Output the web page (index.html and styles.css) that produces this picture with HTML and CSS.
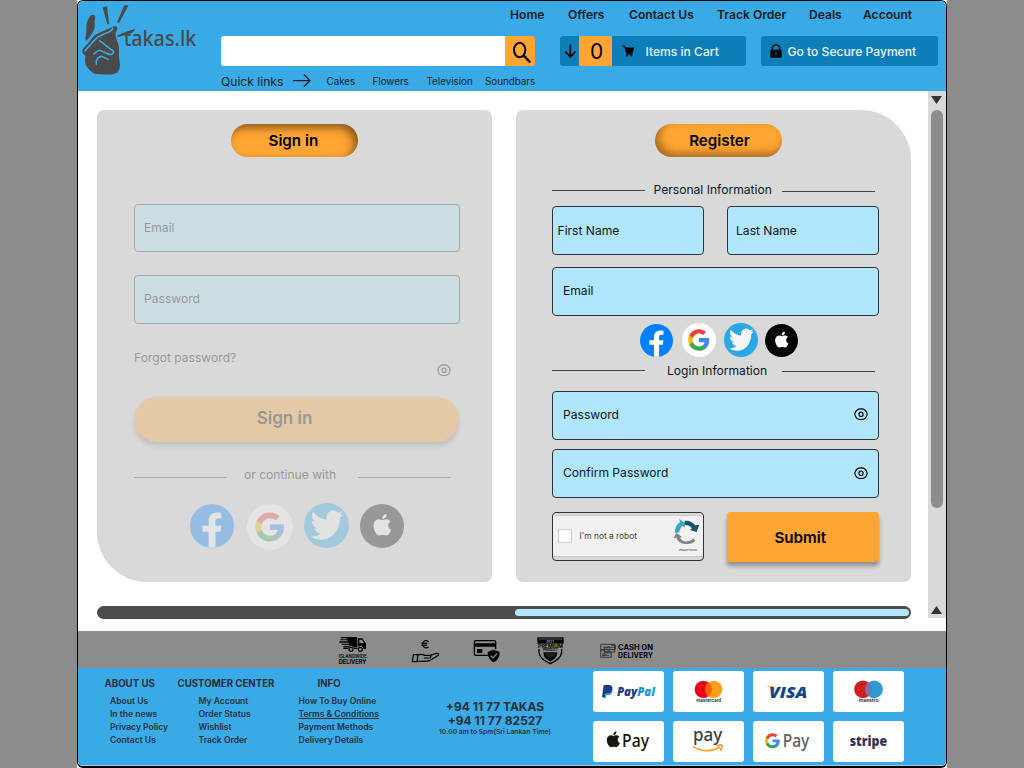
FILE: index.html
```html
<!DOCTYPE html>
<html lang="en">
<head>
<meta charset="utf-8">
<title>takas.lk - Sign in or Register</title>
<link rel="stylesheet" href="styles.css">
</head>
<body>
<svg class="sprite" width="0" height="0" aria-hidden="true">
  <symbol id="facebook" viewBox="0 0 48 48">
    <circle cx="24" cy="24" r="24" fill="#0080ff"/>
    <path fill="#fff" d="M20.3 47.8V30.3h-6.700v-6.700h6.700V19c0-6.500 3.800-9.700 9.600-9.700 1.800 0 3.600.2 4.200.4v6h-3.400c-2.200 0-2.900 1.300-2.900 3.200v4.700h6.400l-1 6.700h-5.400v17.500z"/>
  </symbol>
  <symbol id="g" viewBox="0 0 24 24">
    <path fill="#4285f4" d="M22.56 12.25c0-.78-.07-1.53-.2-2.25H12v4.26h5.92c-.26 1.37-1.04 2.53-2.21 3.31v2.77h3.57c2.08-1.92 3.28-4.74 3.28-8.09z"/>
    <path fill="#34a853" d="M12 23c2.97 0 5.46-.98 7.28-2.66l-3.57-2.77c-.98.66-2.23 1.06-3.71 1.06-2.86 0-5.29-1.93-6.16-4.53H2.18v2.84C3.99 20.53 7.7 23 12 23z"/>
    <path fill="#fbbc05" d="M5.84 14.09c-.22-.66-.35-1.36-.35-2.09s.13-1.43.35-2.09V7.07H2.18C1.43 8.55 1 10.22 1 12s.43 3.45 1.18 4.93l3.66-2.84z"/>
    <path fill="#ea4335" d="M12 5.38c1.62 0 3.06.56 4.21 1.64l3.15-3.15C17.45 2.09 14.97 1 12 1 7.7 1 3.99 3.47 2.18 7.07l3.66 2.84c.87-2.6 3.3-4.53 6.16-4.53z"/>
  </symbol>
  <symbol id="google" viewBox="0 0 48 48">
    <circle cx="24" cy="24" r="24" fill="#fff"/>
    <use href="#g" x="7.300" y="7.400" width="33.200" height="33.200"/>
  </symbol>
  <symbol id="twitter" viewBox="0 0 48 48">
    <circle cx="24" cy="24" r="24" fill="#2ba7e6"/>
    <path transform="translate(7.2 4.4) scale(1.45 1.6)" fill="#f5f7f8" d="M23.953 4.57a10 10 0 01-2.825.775 4.958 4.958 0 002.163-2.723c-.951.555-2.005.959-3.127 1.184a4.92 4.92 0 00-8.384 4.482C7.69 8.095 4.067 6.13 1.64 3.162a4.822 4.822 0 00-.666 2.475c0 1.71.87 3.213 2.188 4.096a4.904 4.904 0 01-2.228-.616v.06a4.923 4.923 0 003.946 4.827 4.996 4.996 0 01-2.212.085 4.936 4.936 0 004.604 3.417 9.867 9.867 0 01-6.102 2.105c-.39 0-.779-.023-1.17-.067a13.995 13.995 0 007.557 2.209c9.053 0 13.998-7.496 13.998-13.985 0-.21 0-.42-.015-.63A9.935 9.935 0 0024 4.59z"/>
  </symbol>
  <symbol id="apple-mark" viewBox="0 0 24 24">
    <path d="M12.152 6.896c-.948 0-2.415-1.078-3.96-1.04-2.04.027-3.91 1.183-4.961 3.014-2.117 3.675-.546 9.103 1.519 12.09 1.013 1.454 2.208 3.09 3.792 3.039 1.52-.065 2.09-.987 3.935-.987 1.831 0 2.35.987 3.96.948 1.637-.026 2.676-1.48 3.676-2.948 1.156-1.688 1.636-3.325 1.662-3.415-.039-.013-3.182-1.221-3.22-4.857-.026-3.04 2.48-4.494 2.597-4.559-1.429-2.09-3.623-2.324-4.39-2.376-2-.156-3.675 1.09-4.61 1.09zM15.53 3.83c.843-1.012 1.4-2.427 1.245-3.83-1.207.052-2.662.805-3.532 1.818-.78.896-1.454 2.338-1.273 3.714 1.338.104 2.715-.688 3.559-1.701"/>
  </symbol>
  <symbol id="apple" viewBox="0 0 48 48">
    <circle cx="24" cy="24" r="24" fill="#050505"/>
    <use href="#apple-mark" fill="#fff" x="12.600" y="11" width="23.500" height="23.500"/>
  </symbol>
  <symbol id="eye" viewBox="0 0 40 36">
    <path fill="none" stroke="#000" stroke-width="3.400" d="M2 18C4 8 11 2.500 20 2.500S36 8 38 18C36 28 29 33.500 20 33.500S4 28 2 18z"/>
    <ellipse cx="20" cy="18" rx="6" ry="6.500" fill="none" stroke="#000" stroke-width="3.400"/>
  </symbol>
</svg>

<div class="frame"><div class="page">
  <header class="header">
    <svg class="logo" viewBox="24 3 402 270" width="134" height="90">
      <g fill="#4a4a4a">
        <path d="M98 23l13-5 6 54-5 1zM163 15l13 1-29 53-6-2z"/>
        <path d="M49 78C50 64 57 55 62 46c6-4 14-2 14 5-2 8-3 13-2 20 2 13-4 24-10 33-5 8-11 13-15 18-4-2-3-10-2-15 3-10 2-19 2-29z"/>
        <path d="M37 155c-1-9 8-14 13-20 9-12 19-27 30-33l42-19c7-4 18-7 20 0 1 6-5 10-5 16-2 10 4 20 7 31 4 15 3 25 3 38 0 12 6 24 1 38-3 9-7 13-15 15-18 5-42 2-58 1-11-5-20-15-26-24-5-10-4-20-3-31-4-3-8-7-9-12z"/>
      </g>
      <g fill="none" stroke="#3dabe8" stroke-width="4.500" stroke-linecap="round" stroke-linejoin="round">
        <path d="M128 84c-2 8-8 11-16 14-13 5-25 10-33 17-12 11-20 24-34 37"/>
        <path d="M88 122c14 8 25 21 42 31 3 7-7 13-15 9l-25-11c-9 1-13 6-18 11"/>
        <path d="M79 193v-11c3-7 10-12 16-13l20 9"/>
      </g>
      <path d="M142 107c16-10 36-14 54-21-4 10-12 14-22 16-12 3-20 8-32 9z" fill="#4a4a4a"/>
      <text x="161" y="138" font-family="Noto Sans, sans-serif" font-weight="500" font-size="67" textLength="218" lengthAdjust="spacingAndGlyphs" fill="#4a4a4a">takas.lk</text>
    </svg>
    <div class="header-main">
      <nav class="nav"><a>Home</a><a>Offers</a><a>Contact Us</a><a>Track Order</a><a>Deals</a><a>Account</a></nav>
      <div class="tools">
        <div class="search"><div class="search-input"></div>
          <div class="search-button"><svg viewBox="0 0 90 90" width="30" height="30" fill="none" stroke="#000"><ellipse cx="44" cy="42" rx="17" ry="22" stroke-width="6"/><path d="M56 59l20 20" stroke-width="7"/></svg></div>
        </div>
        <div class="cart">
          <div class="cart-arrow"><svg viewBox="0 0 57 90" width="19" height="30" fill="none" stroke="#000" stroke-width="5" stroke-linecap="round" stroke-linejoin="round"><path d="M31 28v34M17 48l14 15 14-15"/></svg></div>
          <div class="cart-count">0</div>
          <div class="cart-label"><svg viewBox="0 0 38 36" width="12.500" height="12"><path d="M1 1h6l5 6h25l-5 19H13L7 6 1 5zM14 27h16v3H14z"/><circle cx="15" cy="32" r="3"/><circle cx="29" cy="32" r="3"/></svg><span>Items in Cart</span></div>
        </div>
        <div class="pay"><svg viewBox="0 0 36 42" width="12" height="14"><path d="M7 18v-6C7 5 12 2.500 18 2.500S29 5 29 12v6" fill="none" stroke="#000" stroke-width="4"/><rect x="1" y="17" width="34" height="24" rx="3"/><path d="M18 26v7" stroke="#0e7eb9" stroke-width="3"/></svg><span>Go to Secure Payment</span></div>
      </div>
      <div class="quick"><span class="quick-title">Quick links</span>
        <svg viewBox="0 0 54 40" width="18" height="13.300" fill="none" stroke="#0b1e28" stroke-width="4" stroke-linecap="round" stroke-linejoin="round"><path d="M2 20h48M34 3l17 17-17 17"/></svg>
        <a>Cakes</a><a>Flowers</a><a>Television</a><a>Soundbars</a></div>
    </div>
  </header>

  <main class="main">
    <div class="content">
      <div class="panels">
        <section class="panel signin">
          <h2 class="pill">Sign in</h2>
          <form class="faded">
            <label class="field email">Email</label>
            <label class="field password">Password</label>
            <div class="forgot"><span>Forgot password?</span><svg width="14" height="12.500"><use href="#eye"/></svg></div>
            <div class="signin-button">Sign in</div>
            <div class="divider continue"><i></i><span>or continue with</span><i></i></div>
            <div class="social large">
              <svg class="fb"><use href="#facebook"/></svg><svg class="go"><use href="#google"/></svg><svg class="tw"><use href="#twitter"/></svg><svg class="ap"><use href="#apple"/></svg>
            </div>
          </form>
        </section>
        <section class="panel register">
          <h2 class="pill">Register</h2>
          <form class="register-form">
            <div class="divider personal"><i></i><span>Personal Information</span><i></i></div>
            <div class="names"><label class="field first">First Name</label><label class="field last">Last Name</label></div>
            <label class="field">Email</label>
            <div class="social small">
              <svg class="fb"><use href="#facebook"/></svg><svg class="go"><use href="#google"/></svg><svg class="tw"><use href="#twitter"/></svg><svg class="ap"><use href="#apple"/></svg>
            </div>
            <div class="divider login"><i></i><span>Login Information</span><i></i></div>
            <label class="field pass"><span>Password</span><svg width="14" height="12.500"><use href="#eye"/></svg></label>
            <label class="field confirm"><span>Confirm Password</span><svg width="14" height="12.500"><use href="#eye"/></svg></label>
            <div class="actions">
              <div class="captcha"><div class="captcha-inner"><i class="box"></i><span>I'm not a robot</span>
                <svg viewBox="402 234 82 104" width="27.300" height="34.700">
                  <path d="M408 279c0-17 6-26 15-32l-2-10 17 12-1 13-7-4c-6 5-8 12-9 19z" fill="#35a8cf"/>
                  <path d="M437 242c15-1 25 4 32 14l12-2-8 22-20-6 6-5c-6-8-13-11-22-11z" fill="#1c5568"/>
                  <path d="M404 295l8-17 17 13-6 2c5 8 12 12 22 11 7 0 13-3 18-9l6 7c-8 8-16 10-26 10-16 0-26-6-31-19z" fill="#858585"/>
                  <text x="447" y="334" text-anchor="middle" font-family="Inter, sans-serif" font-weight="600" font-size="8" textLength="54" lengthAdjust="spacingAndGlyphs" fill="#444">reCAPTCHA</text>
                </svg></div></div>
              <div class="submit">Submit</div>
            </div>
          </form>
        </section>
      </div>
      <div class="hscroll"><i></i></div>
    </div>
    <div class="vscroll"><svg width="11" height="8" viewBox="0 0 11 8"><path d="M0 0h11L5.500 8z" fill="#333"/></svg><i></i><svg width="11" height="8" viewBox="0 0 11 8"><path d="M0 8h11L5.500 0z" fill="#333"/></svg></div>
  </main>

  <div class="strip">
    <svg viewBox="54 24 90 88" width="30" height="29.300">
      <path d="M62 27h49v31H70v-4h17v-3H65v-4h22v-3H58v-4h25v-3H61v-3h20v-3H62zM113 31h14l11 16v16h-8a9 9 0 0 0-18 0h-10a9 9 0 0 0-18 0H70v-4h43z"/><path d="M118 35h8l6 10h-14z" fill="#8c8c8c"/><circle cx="93" cy="64" r="6" fill="none" stroke="#000" stroke-width="3.500"/><circle cx="121" cy="64" r="6" fill="none" stroke="#000" stroke-width="3.500"/>
      <text x="56" y="91" font-family="Inter, sans-serif" font-weight="600" font-size="13" textLength="84" lengthAdjust="spacingAndGlyphs">ISLANDWIDE</text>
      <text x="56" y="108" font-family="Inter, sans-serif" font-weight="700" font-size="17" textLength="83" lengthAdjust="spacingAndGlyphs">DELIVERY</text>
    </svg>
    <svg viewBox="272 24 90 88" width="30" height="29.300" fill="none" stroke="#000" stroke-width="3.500" stroke-linejoin="round">
      <path d="M325 41c-11-7-18 0-18 8s8 14 18 8M303 46h18M303 52h17"/><path d="M279 80h14l-3 21h-14zM292 81c9-3 15-3 20 1h16c6 1 5 8-1 8h-16M328 83l20-7c7-1 9 4 4 7l-25 15c-8 3-28 3-37 1"/>
    </svg>
    <svg viewBox="460 24 90 88" width="30" height="29.300">
      <path fill="none" stroke="#000" stroke-width="4" d="M506 82h-38q-4 0-4-4V42q0-4 4-4h56q4 0 4 4v21"/><path d="M464 46h64v10h-64zM472 63h16v12h-16z"/><path d="M522 65l18 7c0 14-5 24-18 31-13-7-18-17-18-31z"/><path d="M513 83l7 7 12-13" fill="none" stroke="#8c8c8c" stroke-width="4"/>
    </svg>
    <svg viewBox="648 24 90 88" width="30" height="29.300">
      <path d="M652 28h79v19h-79z"/><path d="M657 33h69" stroke="#8c8c8c" stroke-width="2"/><text x="691" y="44" text-anchor="middle" font-size="9" font-weight="700" font-family="Inter, sans-serif" fill="#8c8c8c">BEST</text>
      <text x="654" y="59" font-size="13" font-weight="700" font-family="Inter, sans-serif" textLength="75" lengthAdjust="spacingAndGlyphs">PREMIUM</text><text x="669" y="69" font-size="9" font-weight="700" font-family="Inter, sans-serif" textLength="44" lengthAdjust="spacingAndGlyphs">PRODUCT</text>
      <path d="M657 63v10c2 17 16 25 34 34 18-9 32-17 34-34V63" fill="none" stroke="#000" stroke-width="4"/><path d="M670 73h42l-2 12c-4 7-11 11-19 16-8-5-15-9-19-16z"/><path d="M676 78h30M678 84h26" stroke="#777" stroke-width="1.500"/>
    </svg>
    <svg viewBox="838 24 168 88" width="56" height="29.300">
      <g fill="none" stroke="#292929" stroke-width="2.500"><path d="M843 49h42v16h-42zM854 58h31v14h-31zM843 66h12v9h20v13h-32zM874 52h13v12M858 75c4-7 12-7 16-2M849 57h8M850 82h18"/><circle cx="866" cy="61" r="5"/><circle cx="852" cy="80" r="4"/></g>
      <text x="895" y="66" font-size="21" font-weight="700" font-family="Inter, sans-serif" textLength="105" lengthAdjust="spacingAndGlyphs">CASH ON</text><text x="895" y="90" font-size="21" font-weight="700" font-family="Inter, sans-serif" textLength="105" lengthAdjust="spacingAndGlyphs">DELIVERY</text>
    </svg>
  </div>

  <footer class="footer">
    <div class="links about"><h3>ABOUT US</h3><a>About Us</a><a>In the news</a><a>Privacy Policy</a><a>Contact Us</a></div>
    <div class="links customer"><h3>CUSTOMER CENTER</h3><a>My Account</a><a>Order Status</a><a>Wishlist</a><a>Track Order</a></div>
    <div class="links info"><h3>INFO</h3><a>How To Buy Online</a><a><u>Terms &amp; Conditions</u></a><a>Payment Methods</a><a>Delivery Details</a></div>
    <div class="phone"><b>+94 11 77 TAKAS</b><b>+94 11 77 82527</b><small>10.00 am to 5pm(Sri Lankan Time)</small></div>
    <div class="cards">
      <svg viewBox="0 0 213 123"><path d="M32 42h17c8 1 11 6 9 14-2 9-8 12-16 12h-5l-2 10h-8z" fill="#1c3b83"/><path d="M57 53c4 12-2 19-14 19h-3l-2 10h-8l1-4h4l3-10h5c9 0 14-6 14-15z" fill="#189bd7"/><text x="72" y="75" font-family="Open Sans, sans-serif" font-weight="800" font-style="italic" font-size="34" textLength="114" lengthAdjust="spacingAndGlyphs" fill="#253b80">Pay<tspan fill="#179bd7">Pal</tspan></text></svg>
      <svg viewBox="0 0 213 123"><circle cx="91" cy="55" r="26" fill="#eb001b"/><circle cx="122" cy="55" r="26" fill="#f79e1b"/><path d="M106.500 34a26 26 0 0 1 0 42 26 26 0 0 1 0-42z" fill="#ff5f00"/><text x="107" y="93" text-anchor="middle" font-family="Inter, sans-serif" font-weight="600" font-size="13" textLength="75" lengthAdjust="spacingAndGlyphs" fill="#222">mastercard</text></svg>
      <svg viewBox="0 0 213 123"><path d="M42 45h14c5 0 7 2 8 6l2 12c-5-9-13-14-24-17z" fill="#f2ae14"/><text x="48" y="80" font-family="Open Sans, sans-serif" font-weight="800" font-style="italic" font-size="49" textLength="115" lengthAdjust="spacingAndGlyphs" fill="#0e4595">VISA</text></svg>
      <svg viewBox="0 0 213 123"><circle cx="90" cy="55" r="26.500" fill="#d0201e"/><circle cx="123" cy="55" r="26.500" fill="#2f98d6"/><path d="M106.500 34a26.500 26.500 0 0 1 0 42 26.500 26.500 0 0 1 0-42z" fill="#7375a9"/><text x="107" y="94" text-anchor="middle" font-family="Inter, sans-serif" font-weight="600" font-size="13" textLength="59" lengthAdjust="spacingAndGlyphs" fill="#222">maestro</text></svg>
      <svg viewBox="0 0 213 123"><use href="#apple-mark" x="37" y="31" width="48" height="48" fill="#15160f"/><text x="87" y="79" font-family="Noto Sans, sans-serif" font-weight="500" font-size="54" textLength="81" lengthAdjust="spacingAndGlyphs" fill="#15160f">Pay</text></svg>
      <svg viewBox="0 0 213 123"><text x="60" y="61" font-family="Noto Sans, sans-serif" font-weight="500" font-size="53" textLength="88" lengthAdjust="spacingAndGlyphs" fill="#36424d">pay</text><path d="M60 76c25 16 55 17 80 3M131 74c12-3 18-2 16 2-1 7-3 10-6 13" fill="none" stroke="#f79c1c" stroke-width="5"/></svg>
      <svg viewBox="0 0 213 123"><use href="#g" x="34" y="35" width="49" height="49"/><text x="89" y="79" font-family="Noto Sans, sans-serif" font-weight="500" font-size="54" textLength="80" lengthAdjust="spacingAndGlyphs" fill="#5f6368">Pay</text></svg>
      <svg viewBox="0 0 213 123"><text x="50" y="75" font-family="Open Sans, sans-serif" font-weight="800" font-size="44" textLength="112" lengthAdjust="spacingAndGlyphs" fill="#32325d">stripe</text></svg>
    </div>
  </footer>
</div></div>
</body>
</html>
```

FILE: styles.css
```css
* { box-sizing: border-box; }
body { margin: 0; background: #8c8c8c; font-family: Inter, "Liberation Sans", sans-serif; color: #0d171c; overflow: hidden; }
svg { display: block; flex: none; }
h2, h3 { margin: 0; }
.sprite { position: absolute; }
.frame { width: 870px; height: 768px; margin-left: 77px; background: #fff; }
.page { width: 870px; height: 768px; border: 1px solid #000; border-bottom-width: 2px; border-radius: 6px; overflow: hidden; background: #fff; white-space: nowrap; }

.header { display: flex; height: 90px; background: #3aaae7; }
.logo { margin-right: 9px; }
.header-main { flex: 1; }
.nav { display: grid; grid-template-columns: 58px 61px 88px 92px 54px 60px; height: 27px; margin: 0 0 8px 289px; font-size: 12.100px; font-weight: 600; line-height: 27px; color: #0e1a20; }
.tools { display: flex; height: 30px; }
.search { display: flex; width: 314px; border-radius: 3px; overflow: hidden; margin-right: 25px; }
.search-input { flex: 1; background: #fff; }
.search-button { width: 30px; background: #ffa533; }
.cart { display: flex; width: 186px; margin-right: 15px; border-radius: 3px; overflow: hidden; background: #0e7eb9; }
.cart-arrow { width: 19px; }
.cart-count { width: 33px; padding-left: 2px; background: #ffa533; color: #000; font-size: 21px; line-height: 32px; text-align: center; }
.cart-label, .pay { display: flex; align-items: center; font-size: 12.100px; font-weight: 500; color: #e7f4fb; }
.cart-label { padding-left: 10px; gap: 11px; }
.pay { width: 177px; border-radius: 3px; background: #0e7eb9; padding-left: 9px; gap: 5.500px; }
.quick { display: flex; height: 25px; align-items: center; padding-top: 5px; font-size: 9.800px; color: #0b1e28; }
.quick-title { width: 72px; font-size: 12.100px; }
.quick a:nth-of-type(1) { width: 46px; margin-left: 15.500px; }
.quick a:nth-of-type(2) { width: 54px; }
.quick a:nth-of-type(3) { width: 58.500px; }

.main { display: flex; height: 540px; }
.content { width: 850px; padding: 19px 0 0 19px; }
.panels { display: flex; gap: 24px; }
.panel { width: 395px; height: 472px; background: #d9d9d9; padding-top: 14px; }
.signin { border-radius: 7px 7px 7px 50px; }
.register { border-radius: 7px 50px 7px 7px; }
.pill { width: 127px; height: 33px; border-radius: 17px; background: #ffa533; color: #000; font-size: 15.200px; font-weight: 600; line-height: 33px; text-align: center; }
.signin .pill { margin-left: 134.400px; padding-right: 3px; box-shadow: inset -4px 4px 9px rgba(0,0,0,.45); }
.register .pill { margin-left: 139px; padding-left: 2px; box-shadow: inset 4px -4px 9px rgba(0,0,0,.35); }
.faded { opacity: .3; margin: 47px 0 0 37px; width: 326px; color: #000; }
.field { display: flex; align-items: center; justify-content: space-between; height: 49px; border: 1px solid #333; border-radius: 4px; background: #b0e7ff; padding: 0 10px; font-size: 12.100px; }
.faded .field { padding: 0 9px 2px; }
.faded .email { height: 48px; padding-bottom: 1px; }
.password { margin-top: 23px; }
.forgot { display: flex; justify-content: space-between; height: 50px; margin: 23px 9.500px 0 0; font-size: 12.100px; line-height: 21px; }
.forgot svg { margin-top: 17px; }
.signin-button { height: 45px; width: 325px; border-radius: 23px; background: #ffa533; box-shadow: 0 4px 4px rgba(0,0,0,.35); font-size: 17px; font-weight: 600; line-height: 43px; text-align: center; padding-right: 24px; }
.divider { display: flex; align-items: center; font-size: 12.100px; line-height: 16px; }
.divider i { width: 93px; height: 1px; background: #444; }
.continue { margin-top: 25px; }
.continue span { width: 93px; margin: 0 21px 0 17px; }
.continue i { margin-top: 4px; }
.social { display: flex; align-items: flex-start; }
.large { margin: 20px 0 0 56px; }
.large .fb { width: 44px; height: 44px; margin-top: 1px; }
.large .go { width: 46px; height: 46px; margin: 1px 0 0 12.500px; }
.large .tw { width: 45px; height: 45px; margin-left: 11.500px; }
.large .ap { width: 44px; height: 44px; margin: 1px 0 0 11px; }
.register-form { width: 327px; margin: 25px 0 0 36px; }
.personal span { width: 118px; margin: 0 10.500px 0 8.500px; }
.personal { height: 16px; }
.divider.personal i:last-child, .divider.login i:last-child { margin-top: 2px; }
.names { display: flex; gap: 23px; margin: 8px 0 12px; }
.names .field { width: 152px; }
.names .first { padding-left: 4.500px; padding-bottom: 1px; }
.names .last { padding-left: 8px; padding-bottom: 1px; }
.register-form > .field { padding-bottom: 2px; }
.small { margin: 6.500px 0 0 88px; height: 40px; }
.small .fb { width: 33px; height: 33px; margin-top: 1.500px; }
.small .go { width: 34px; height: 34px; margin: .5px 0 0 8.500px; }
.small .tw { width: 34px; height: 34px; margin-left: 8.500px; }
.small .ap { width: 33px; height: 33px; margin: 1px 0 0 7px; }
.login span { width: 100px; margin: 0 15px 0 22px; }
.pass { margin: 12px 0 9px; }
.register-form > .confirm { padding-bottom: 1px; }
.confirm svg { margin-top: 2px; }
.pass svg { margin-top: 1px; }
.actions { display: flex; gap: 23px; margin-top: 14px; }
.captcha { width: 152px; height: 49px; border: 1px solid #333; border-radius: 4px; padding: 2px 0 3px; }
.captcha-inner { height: 42px; background: #f1f1f1; display: flex; align-items: center; border: 1px solid #ccc; border-width: 1px 0; font-size: 8.400px; color: #444; }
.box { width: 14px; height: 14px; margin: 0 7.500px 0 5px; border: 1px solid #ccc; background: #fff; }
.captcha-inner svg { margin-left: auto; margin-right: 2px; }
.submit { width: 153px; height: 50px; border-radius: 4px; background: #ffa533; box-shadow: 0 4px 4px rgba(0,0,0,.35); color: #000; font-size: 15.200px; font-weight: 600; line-height: 51px; text-align: center; padding-right: 5px; }
.hscroll { width: 814px; height: 13px; margin-top: 24px; border-radius: 7px; background: #4d4d4d; padding: 3px 2px; display: flex; justify-content: flex-end; }
.hscroll i { width: 394px; height: 7px; border-radius: 4px; background: #b0e7ff; }
.vscroll { width: 18px; height: 527px; background: #d9d9d9; padding: 5px 0 4px; display: flex; flex-direction: column; align-items: center; }
.vscroll svg { margin-right: 1px; }
.vscroll i { width: 12px; height: 398px; margin: 6px 0 auto; border-radius: 6px; background: #8c8c8c; }

.strip { display: flex; height: 37px; padding: 5px 0 0 260px; background: #8c8c8c; }
.strip svg:nth-child(2) { margin-left: 42.700px; }
.strip svg:nth-child(3) { margin-left: 32.600px; }
.strip svg:nth-child(4) { margin-left: 32.700px; }
.strip svg:nth-child(5) { margin-left: 33.400px; }

.footer { display: flex; height: 98px; background: #3aaae7; color: #20313a; border-bottom: 1px solid #9bcfe9; }
.links { display: flex; flex-direction: column; font-size: 8.550px; font-weight: 600; line-height: 13.300px; padding-top: 9.500px; }
.links h3 { font-size: 9.700px; line-height: 12px; font-weight: 700; margin-bottom: 5px; }
.about { width: 94px; padding-left: 32px; }
.about h3 { margin-left: -5.500px; }
.customer { width: 98px; padding-left: 26.500px; }
.customer h3 { margin-left: -21px; }
.info { width: 165px; padding-left: 28.500px; }
.info h3 { margin-left: 19px; }
.phone { width: 120px; padding-top: 32px; display: flex; flex-direction: column; align-items: center; line-height: 14.300px; font-size: 12px; }
.phone b { font-weight: 700; }
.phone small { font-size: 6.800px; line-height: 5px; font-weight: 600; }
.cards { display: grid; grid-template-columns: repeat(4, 71px); grid-template-rows: 41px 41px; gap: 9px; margin: 3px 0 0 38px; }
.cards svg { width: 71px; height: 41px; border-radius: 3px; background: #fff; }
```
